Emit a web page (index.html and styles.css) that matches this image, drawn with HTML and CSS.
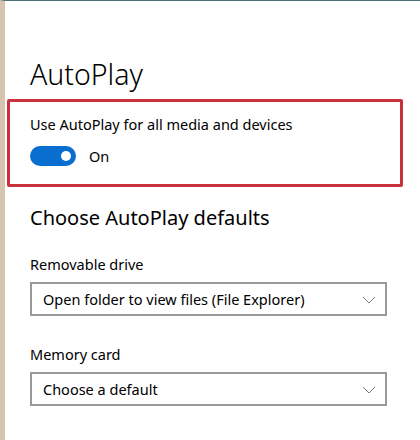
FILE: index.html
```html
<!DOCTYPE html>
<html lang="en">
<head>
  <meta charset="UTF-8" />
  <title>AutoPlay</title>
  <link rel="stylesheet" href="styles.css">
</head>
<body>
  <div class="window">
    <div class="panel">
      <h1 class="page-title">AutoPlay</h1>

      <!-- highlighted setting -->
      <div class="highlight">
        <p class="setting-label">Use AutoPlay for all media and devices</p>
        <div class="toggle-row">
          <span class="toggle on"><span class="knob"></span></span>
          <span class="toggle-text">On</span>
        </div>
      </div>

      <div class="section">
        <h2 class="section-title">Choose AutoPlay defaults</h2>

        <div class="field">
          <label class="field-label">Removable drive</label>
          <div class="dropdown">
            <span>Open folder to view files (File Explorer)</span>
            <svg class="chevron" width="14" height="8" viewBox="0 0 14 8">
              <polyline points="1,1 7,7 13,1" fill="none" stroke="#777" stroke-width="1"/>
            </svg>
          </div>
        </div>

        <div class="field">
          <label class="field-label">Memory card</label>
          <div class="dropdown">
            <span>Choose a default</span>
            <svg class="chevron" width="14" height="8" viewBox="0 0 14 8">
              <polyline points="1,1 7,7 13,1" fill="none" stroke="#777" stroke-width="1"/>
            </svg>
          </div>
        </div>
      </div>
    </div>
  </div>
</body>
</html>
```

FILE: styles.css
```css
* {
  box-sizing: border-box;
  margin: 0;
  padding: 0;
}

body {
  background: #ffffff;
  font-family: 'Noto Sans', 'Open Sans', sans-serif;
  color: #000000;
}

.window {
  height: 440px;
  border-left: 5px solid #d7c4af;
  border-top: 1px solid #4b6e7b;
  background: #ffffff;
}

.panel {
  padding: 0 17px 0 2px;
}

.page-title {
  margin: 50px 0 0 23px;
  font-size: 28.5px;
  font-weight: 300;
  line-height: 46px;
}

.highlight {
  width: 396px;
  height: 88px;
  margin-top: 2px;
  border: 3px solid #c9313c;
  border-radius: 2px;
  padding: 11px 0 0 20px;
}

.setting-label {
  font-size: 14.5px;
  line-height: 22px;
}

.toggle-row {
  display: flex;
  align-items: center;
  gap: 13px;
  margin-top: 11px;
}

.toggle {
  width: 46px;
  height: 20px;
  border-radius: 10px;
  background: #0a6ed1;
  display: flex;
  align-items: center;
  justify-content: flex-end;
  padding-right: 5px;
}

.knob {
  width: 10px;
  height: 10px;
  border-radius: 50%;
  background: #ffffff;
}

.toggle-text {
  font-size: 14.5px;
}

.section {
  margin-left: 23px;
}

.section-title {
  margin-top: 16px;
  font-size: 20px;
  font-weight: 400;
  line-height: 30px;
}

.field {
  margin-top: 21px;
}

.field + .field {
  margin-top: 28px;
}

.field-label {
  display: block;
  font-size: 14.5px;
  line-height: 20px;
  margin-bottom: 8px;
}

.dropdown {
  width: 357px;
  height: 34px;
  border: 2px solid #999999;
  display: flex;
  align-items: center;
  justify-content: space-between;
  padding: 0 9px 0 11px;
  font-size: 14.5px;
}

.chevron {
  margin-top: 1px;
}
```
